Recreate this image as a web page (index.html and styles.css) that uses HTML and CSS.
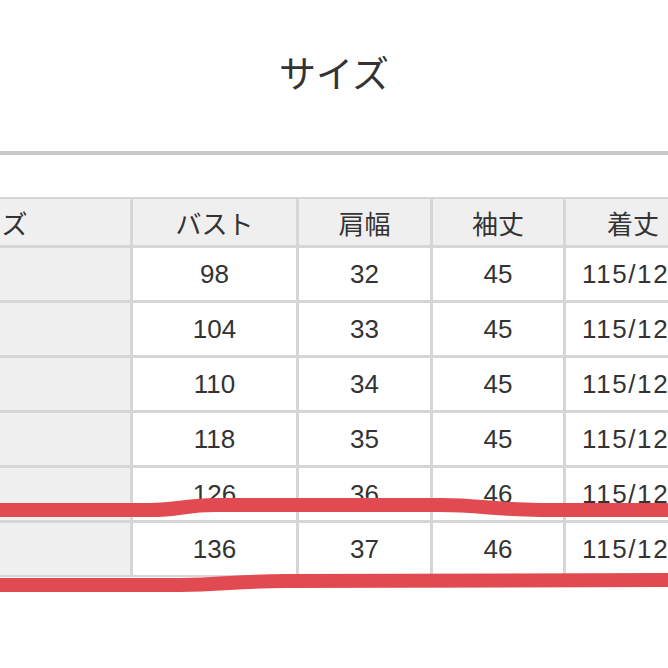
FILE: index.html
```html
<!DOCTYPE html>
<html lang="ja">
<head>
<meta charset="utf-8">
<title>サイズ</title>
<link rel="stylesheet" href="styles.css">
</head>
<body>
<div class="page">
  <h1 class="title">サイズ</h1>
  <div class="rule"></div>
  <div class="table-wrap">
    <div class="size-table">
      <div class="cell head first">サイズ</div>
      <div class="cell head">バスト</div>
      <div class="cell head">肩幅</div>
      <div class="cell head">袖丈</div>
      <div class="cell head">着丈</div>

      <div class="cell first">S</div>
      <div class="cell">98</div>
      <div class="cell">32</div>
      <div class="cell">45</div>
      <div class="cell len">115/125</div>

      <div class="cell first">M</div>
      <div class="cell">104</div>
      <div class="cell">33</div>
      <div class="cell">45</div>
      <div class="cell len">115/125</div>

      <div class="cell first">L</div>
      <div class="cell">110</div>
      <div class="cell">34</div>
      <div class="cell">45</div>
      <div class="cell len">115/125</div>

      <div class="cell first">LL</div>
      <div class="cell">118</div>
      <div class="cell">35</div>
      <div class="cell">45</div>
      <div class="cell len">115/125</div>

      <div class="cell first">3L</div>
      <div class="cell">126</div>
      <div class="cell">36</div>
      <div class="cell">46</div>
      <div class="cell len">115/125</div>

      <div class="cell first">4L</div>
      <div class="cell">136</div>
      <div class="cell">37</div>
      <div class="cell">46</div>
      <div class="cell len">115/125</div>
    </div>
  </div>
  <svg class="marker" width="668" height="668" viewBox="0 0 668 668" aria-hidden="true">
    <path d="M -10 510 L 150 510 C 180 510 185 505 215 505 L 440 505 C 478 505 500 510 540 510 L 690 510" />
    <path d="M -10 585 L 180 585 C 220 585 240 581 285 581 L 690 580" />
  </svg>
</div>
</body>
</html>
```

FILE: styles.css
```css
html, body {
  margin: 0;
  padding: 0;
  background: #ffffff;
}

.page {
  position: relative;
  width: 668px;
  height: 668px;
  overflow: hidden;
  font-family: "Liberation Sans", "Noto Sans CJK JP", sans-serif;
  color: #333333;
}

.title {
  margin: 0;
  padding-top: 52px;
  height: 99px;
  box-sizing: border-box;
  text-align: center;
  font-family: "Noto Sans CJK JP", sans-serif;
  font-weight: 400;
  font-size: 37px;
  line-height: 40px;
  color: #333333;
}

.rule {
  height: 4px;
  margin-top: 52px;
  background: #c9c9c9;
}

.table-wrap {
  margin-top: 42px;
  width: 668px;
  overflow: hidden;
}

.size-table {
  display: grid;
  grid-template-columns: 282px 163px 131px 130px 134px;
  grid-template-rows: 46px repeat(6, 52px);
  gap: 3px;
  padding: 2px;
  margin-left: -154px;
  width: max-content;
  background: #d6d6d6;
}

.cell {
  display: flex;
  align-items: center;
  justify-content: center;
  background: #ffffff;
  font-size: 26px;
  color: #333333;
  white-space: nowrap;
}

.cell.len {
  justify-content: flex-start;
  padding-left: 16px;
  letter-spacing: 1.6px;
}

.cell.head {
  background: #efefef;
  font-family: "Noto Sans CJK JP", sans-serif;
  font-size: 26px;
}

.cell.first {
  background: #f0f0f0;
  font-size: 22px;
  padding-right: 16px;
}

.cell.head.first {
  font-size: 26px;
  padding-right: 0;
}

.marker {
  position: absolute;
  left: 0;
  top: 0;
  pointer-events: none;
}

.marker path {
  fill: none;
  stroke: #e04a50;
  stroke-width: 14;
  stroke-linecap: round;
  stroke-linejoin: round;
}
```
